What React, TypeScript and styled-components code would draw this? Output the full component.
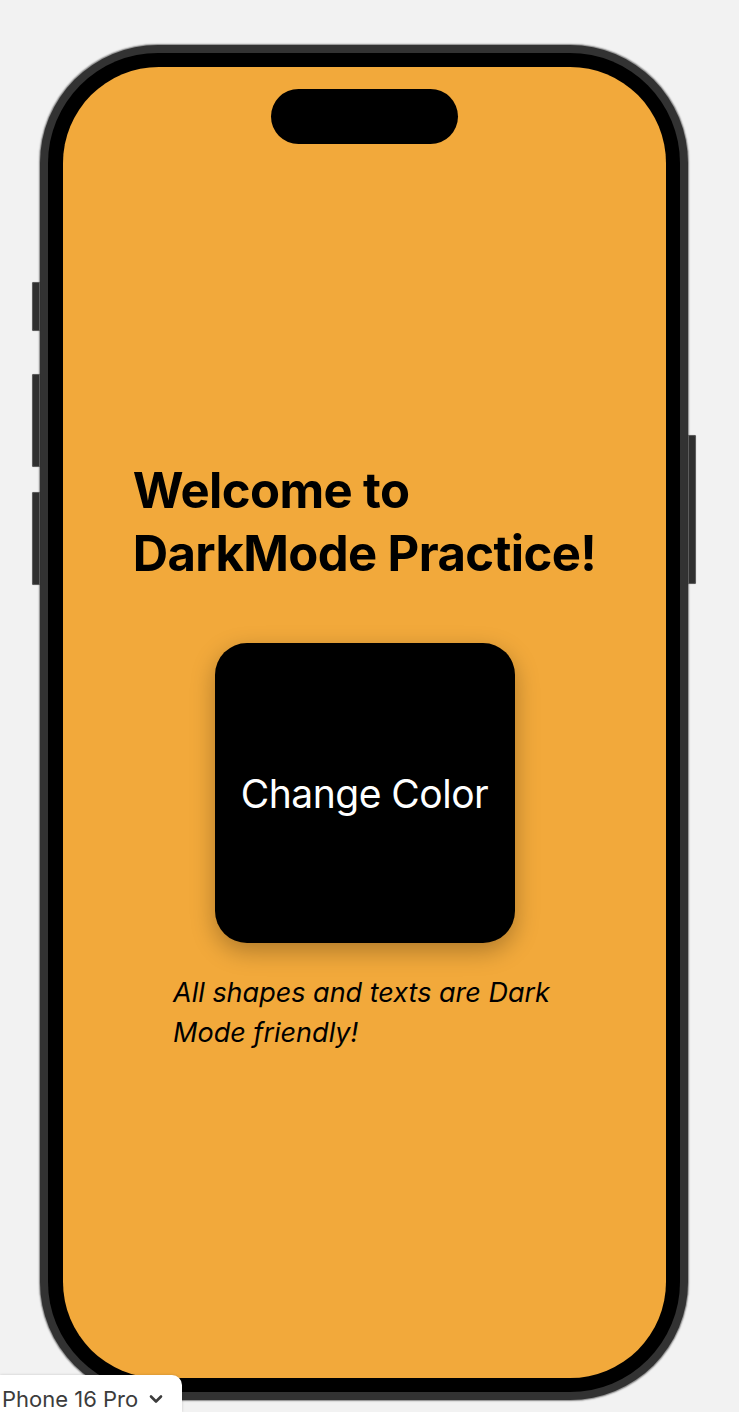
import React from "react";
import styled, { createGlobalStyle } from "styled-components";

const Global = createGlobalStyle`
  html, body { margin: 0; padding: 0; background: #f2f2f2; }
  body { font-family: Inter, "Noto Sans", sans-serif; }
  * { box-sizing: border-box; }
`;

const Page = styled.div`
  position: relative;
  width: 739px;
  height: 1412px;
  overflow: hidden;
  background: #f2f2f2;
  padding: 45px 0 0 40px;
`;

const PhoneShell = styled.div`
  position: relative;
  width: 648px;
  height: 1355px;
  border-radius: 118px;
  background: #323232;
  padding: 8px;
  box-shadow: 0 0 1.5px 0.5px rgba(0, 0, 0, 0.45);
`;

const Bezel = styled.div`
  width: 100%;
  height: 100%;
  border-radius: 110px;
  background: #000;
  padding: 14px 14px 14px 15px;
`;

const Screen = styled.div`
  width: 100%;
  height: 100%;
  border-radius: 96px;
  background: #f2a93b;
  display: flex;
  flex-direction: column;
  align-items: center;
  padding-top: 22px;
  overflow: hidden;
`;

const Island = styled.div`
  width: 187px;
  height: 55px;
  border-radius: 28px;
  background: #000;
  flex-shrink: 0;
`;

const SideButton = styled.div<{ $side: "left" | "right"; $top: number; $h: number }>`
  position: absolute;
  ${(p) => (p.$side === "left" ? "left: -8px;" : "right: -8px;")}
  top: ${(p) => p.$top}px;
  width: 8px;
  height: ${(p) => p.$h}px;
  background: #2f2f2f;
  border-radius: ${(p) => (p.$side === "left" ? "2px 0 0 2px" : "0 2px 2px 0")};
  box-shadow: inset 0 0 0 1px #5c5c5c, 0 0 1px rgba(0, 0, 0, 0.4);
`;

const Title = styled.h1`
  margin: 315px 0 0 0;
  font-family: Inter, "Noto Sans", sans-serif;
  font-weight: 700;
  font-size: 49px;
  line-height: 63px;
  color: #000;
  text-align: left;
  letter-spacing: -0.6px;
`;

const Line = styled.span`
  display: block;
  white-space: nowrap;
`;

const ColorButton = styled.button`
  margin-top: 58px;
  width: 300px;
  height: 300px;
  border: none;
  border-radius: 32px;
  background: #000;
  color: #fff;
  font-family: Inter, "Noto Sans", sans-serif;
  font-weight: 400;
  font-size: 39px;
  letter-spacing: -0.5px;
  display: flex;
  align-items: center;
  justify-content: center;
  box-shadow: 0 8px 24px rgba(0, 0, 0, 0.28);
  flex-shrink: 0;
  cursor: pointer;
`;

const Caption = styled.p`
  margin: 30px 0 0 -6px;
  font-family: Inter, "Noto Sans", sans-serif;
  font-style: italic;
  font-weight: 400;
  font-size: 27px;
  line-height: 40px;
  color: #000;
  text-align: left;
`;

const DeviceTab = styled.div`
  position: absolute;
  left: 0;
  bottom: 0;
  width: 182px;
  height: 37px;
  background: #fff;
  border-top-right-radius: 10px;
  box-shadow: 0 0 3px rgba(0, 0, 0, 0.18);
  display: flex;
  align-items: center;
  gap: 11px;
  padding: 10px 0 0 2px;
  font-family: Inter, "Noto Sans", sans-serif;
  font-size: 22px;
  color: #3c3c3c;
`;

const Chevron = () => (
  <svg width="14" height="10" viewBox="0 0 14 10" fill="none">
    <path d="M2 2.5 L7 7.5 L12 2.5" stroke="#3c3c3c" strokeWidth="2.6" strokeLinecap="round" strokeLinejoin="round" />
  </svg>
);

export default function App() {
  return (
    <Page>
      <Global />
      <PhoneShell>
        <SideButton $side="left" $top={237} $h={49} />
        <SideButton $side="left" $top={329} $h={93} />
        <SideButton $side="left" $top={447} $h={93} />
        <SideButton $side="right" $top={390} $h={149} />
        <Bezel>
          <Screen>
            <Island />
            <Title>
              <Line>Welcome to</Line>
              <Line>DarkMode Practice!</Line>
            </Title>
            <ColorButton>Change Color</ColorButton>
            <Caption>
              <Line>All shapes and texts are Dark</Line>
              <Line>Mode friendly!</Line>
            </Caption>
          </Screen>
        </Bezel>
      </PhoneShell>
      <DeviceTab>
        <span>Phone 16 Pro</span>
        <Chevron />
      </DeviceTab>
    </Page>
  );
}
